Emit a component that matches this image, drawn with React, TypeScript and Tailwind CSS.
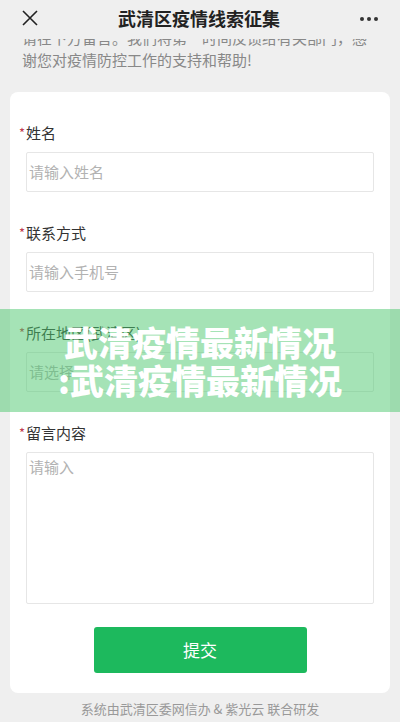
import React from "react";

const fields = [
  { label: "姓名", placeholder: "请输入姓名" },
  { label: "联系方式", placeholder: "请输入手机号" },
  { label: "所在地区(武清区)", placeholder: "请选择" },
];

const cjk = { fontFamily: '"Noto Sans CJK SC", "Noto Sans", sans-serif' };

const Label = ({ text }: { text: string }) => (
  <div className="-ml-[7px] h-[22px] flex items-center text-[15px] leading-[22px] text-[#333]">
    <span className="text-[#c23a4e] w-[7px] text-[13px]">*</span>
    {text}
  </div>
);

export default function App() {
  return (
    <div className="relative w-[400px] h-[722px] overflow-hidden bg-[#efefef]" style={cjk}>
      {/* title bar */}
      <div className="relative z-10 h-[39px] bg-[#efefef] flex items-center justify-between px-[22px]">
        <svg width="16" height="16" viewBox="0 0 16 16" className="mt-[-3px]">
          <path d="M1 1 L15 15 M15 1 L1 15" stroke="#222" strokeWidth="1.6" />
        </svg>
        <div className="text-[18px] font-bold text-[#222] mt-[-3px]">武清区疫情线索征集</div>
        <div className="flex gap-[3px] mt-[-1px]">
          <span className="w-[4px] h-[4px] rounded-full bg-[#333]" />
          <span className="w-[4px] h-[4px] rounded-full bg-[#333]" />
          <span className="w-[4px] h-[4px] rounded-full bg-[#333]" />
        </div>
      </div>

      {/* intro */}
      <div className="-mt-[12px] pl-[22px] text-[15px] leading-[22px] text-[#888] whitespace-nowrap">
        <div>请在下方留言。我们将第一时间反馈给有关部门，感</div>
        <div>谢您对疫情防控工作的支持和帮助!</div>
      </div>

      {/* form card */}
      <div className="mx-[10px] mt-[21px] bg-white rounded-[8px] px-[16px] pt-[30px] pb-[20px]">
        {fields.map((f) => (
          <div key={f.label} className="mb-[30px]">
            <Label text={f.label} />
            <div className="mt-[8px] h-[40px] border border-[#e6e6e6] rounded-[2px] flex items-center pl-[2px] text-[15px] text-[#b2b2b2]">
              {f.placeholder}
            </div>
          </div>
        ))}
        <div>
          <Label text="留言内容" />
          <div className="mt-[8px] h-[152px] border border-[#e6e6e6] rounded-[2px] pl-[2px] pt-[3px] text-[15px] leading-[22px] text-[#b2b2b2]">
            请输入
          </div>
        </div>
        <div className="mt-[23px] flex justify-center">
          <button className="w-[213px] h-[46px] rounded-[3px] bg-[#1db95d] text-white text-[17px]">
            提交
          </button>
        </div>
      </div>

      <div className="mt-[6px] text-center text-[13px] leading-[20px] text-[#999]">
        系统由武清区委网信办 &amp; 紫光云 联合研发
      </div>

      {/* watermark banner */}
      <div className="absolute left-0 top-[309px] w-[400px] h-[103px] bg-[rgba(76,200,110,0.5)] flex flex-col items-center justify-center text-white font-black text-[34px] leading-[38px]">
        <div>武清疫情最新情况</div>
        <div>:武清疫情最新情况</div>
      </div>
    </div>
  );
}
